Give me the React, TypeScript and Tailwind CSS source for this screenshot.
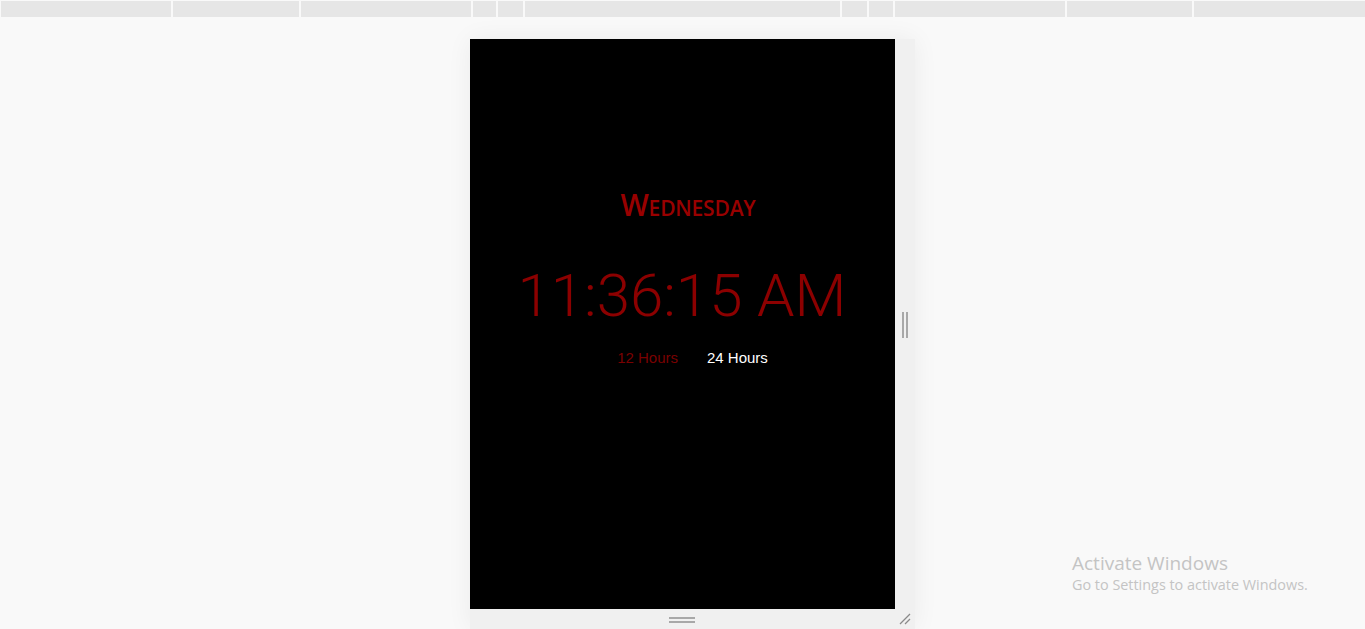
import React from "react";

const segs = [170, 126, 170, 23, 25, 316, 25, 24, 170, 125, 171];

export default function App() {
  return (
    <div className="relative w-[1365px] h-[629px] overflow-hidden bg-[#f9f9f9]">
      <div className="flex gap-[2px] pl-px pt-px h-[17px]">
        {segs.map((w, i) => (
          <div key={i} className="h-[16px] bg-[#e6e6e6]" style={{ width: w }} />
        ))}
      </div>
      <div className="flex justify-center mt-[22px]">
        <div className="ml-5 grid grid-cols-[425px_20px] grid-rows-[570px_20px] bg-[#f0f0f0] shadow-[0_0_24px_rgba(0,0,0,0.06)]">
          <div className="bg-black flex flex-col items-center pt-[150px]">
            <div
              className="text-[#990000] text-[30px] leading-[32px] font-semibold [font-variant:small-caps] tracking-[-0.2px] ml-[11px]"
              style={{ fontFamily: '"Open Sans", sans-serif' }}
            >
              Wednesday
            </div>
            <div
              className="text-[#8c0000] text-[60px] leading-[80px] font-light mt-[35px] -ml-[1px]"
              style={{ fontFamily: "Roboto, sans-serif" }}
            >
              11:36:15 AM
            </div>
            <div
              className="flex gap-[29px] text-[15px] leading-[18px] mt-[13px] ml-[20px]"
              style={{ fontFamily: '"Liberation Sans", Arial, sans-serif' }}
            >
              <span className="text-[#7a0000]">12 Hours</span>
              <span className="text-white">24 Hours</span>
            </div>
          </div>
          <div className="flex items-center justify-center">
            <div className="flex gap-[2px] h-[26px] ml-[-1px] mt-[1px]">
              <div className="w-[2px] bg-[#a8a8a8]" />
              <div className="w-[2px] bg-[#a8a8a8]" />
            </div>
          </div>
          <div className="flex items-center justify-center">
            <div className="flex flex-col gap-[2px] w-[26px] mt-[2px] mr-[1px]">
              <div className="h-[2px] bg-[#a8a8a8]" />
              <div className="h-[2px] bg-[#a8a8a8]" />
            </div>
          </div>
          <div className="relative">
            <svg width="20" height="20" viewBox="0 0 20 20" className="absolute left-0 top-0">
              <line x1="5" y1="15" x2="15" y2="5" stroke="#8a8a8a" strokeWidth="1.3" />
              <line x1="10" y1="15" x2="15" y2="10" stroke="#8a8a8a" strokeWidth="1.3" />
            </svg>
          </div>
        </div>
      </div>
      <div
        className="absolute left-[1072px] top-[550px] text-[#c4c4c4]"
        style={{ fontFamily: '"Open Sans", "Noto Sans", sans-serif' }}
      >
        <div className="text-[19px] leading-[26px]">Activate Windows</div>
        <div className="text-[14.4px] leading-[20px] mt-[-1px]">Go to Settings to activate Windows.</div>
      </div>
    </div>
  );
}
